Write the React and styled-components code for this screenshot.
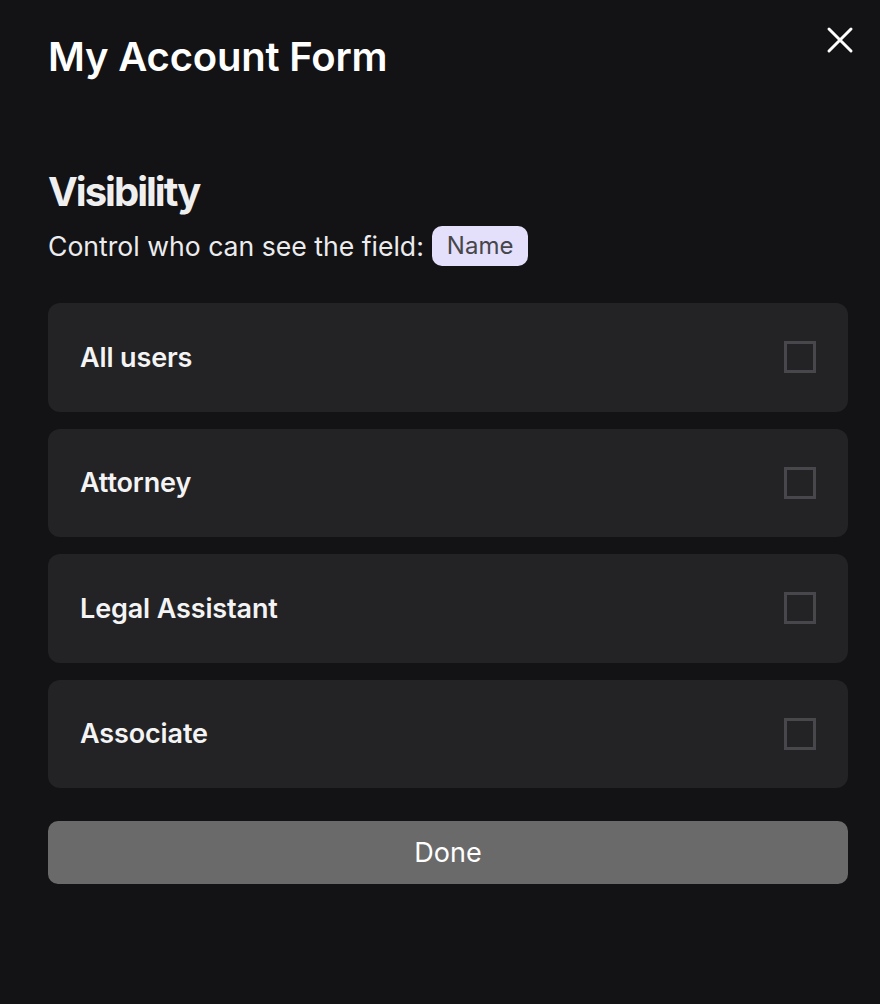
import React, { useState } from "react"
import styled, { createGlobalStyle } from "styled-components"

const GlobalStyle = createGlobalStyle`
    html, body {
        margin: 0;
        padding: 0;
        background: #131315;
    }
    body {
        font-family: Inter, "Noto Sans", "Liberation Sans", sans-serif;
        color: #f2f2f3;
    }
`

const Page = styled.div`
    position: relative;
    min-height: 1004px;
    box-sizing: border-box;
    padding: 33px 32px 0 48px;
    background: #131315;
`

const Title = styled.h1`
    margin: 0;
    font-size: 40px;
    line-height: 48px;
    font-weight: 600;
    color: #ffffff;
    letter-spacing: -0.005em;
`

const CloseButton = styled.button`
    position: absolute;
    top: 26px;
    right: 26px;
    width: 28px;
    height: 28px;
    padding: 0;
    border: none;
    background: none;
    cursor: pointer;
    display: flex;
    align-items: center;
    justify-content: center;
`

const Section = styled.section`
    margin-top: 87px;
`

const Heading = styled.h2`
    margin: 0;
    font-size: 40px;
    line-height: 48px;
    font-weight: 700;
    letter-spacing: -0.05em;
    color: #efeff0;
`

const Subtitle = styled.div`
    margin-top: 10px;
    display: flex;
    align-items: center;
    gap: 8px;
    font-size: 26.6px;
    line-height: 40px;
    font-weight: 400;
    color: #ececee;
`

const Badge = styled.span`
    display: inline-flex;
    align-items: center;
    height: 40px;
    padding: 0 15px;
    border-radius: 10px;
    background: #e4e0fb;
    color: #46464b;
    font-size: 24px;
    font-weight: 400;
`

const List = styled.div`
    margin-top: 37px;
    display: flex;
    flex-direction: column;
    gap: 17px;
`

const Option = styled.label`
    display: flex;
    align-items: center;
    justify-content: space-between;
    height: 108.5px;
    box-sizing: border-box;
    padding: 0 32px;
    border-radius: 12px;
    background: #232325;
    cursor: pointer;
`

const OptionLabel = styled.span`
    font-size: 27px;
    font-weight: 600;
    color: #f4f4f5;
    letter-spacing: -0.005em;
`

const Box = styled.span`
    width: 32px;
    height: 32px;
    box-sizing: border-box;
    border: 3.5px solid ${p => (p.$checked ? "#e4e0fb" : "#47474c")};
    background: ${p => (p.$checked ? "#e4e0fb" : "transparent")};
`

const DoneButton = styled.button`
    margin-top: 33px;
    width: 100%;
    height: 63px;
    border: none;
    border-radius: 10px;
    background: #6a6a6a;
    color: #ffffff;
    font-family: inherit;
    font-size: 27px;
    font-weight: 400;
    cursor: pointer;
`

const roles = ["All users", "Attorney", "Legal Assistant", "Associate"]

export default function App() {
    const [checked, setChecked] = useState({})

    return (
        <Page>
            <GlobalStyle />
            <Title>My Account Form</Title>
            <CloseButton aria-label="Close">
                <svg width="28" height="28" viewBox="0 0 28 28" fill="none">
                    <path d="M3 3L25 25M25 3L3 25" stroke="#ffffff" strokeWidth="3" strokeLinecap="round" />
                </svg>
            </CloseButton>

            <Section>
                <Heading>Visibility</Heading>
                <Subtitle>
                    Control who can see the field:
                    <Badge>Name</Badge>
                </Subtitle>

                <List>
                    {roles.map(r => (
                        <Option key={r} onClick={() => setChecked({ ...checked, [r]: !checked[r] })}>
                            <OptionLabel>{r}</OptionLabel>
                            <Box $checked={!!checked[r]} />
                        </Option>
                    ))}
                </List>

                <DoneButton>Done</DoneButton>
            </Section>
        </Page>
    )
}
